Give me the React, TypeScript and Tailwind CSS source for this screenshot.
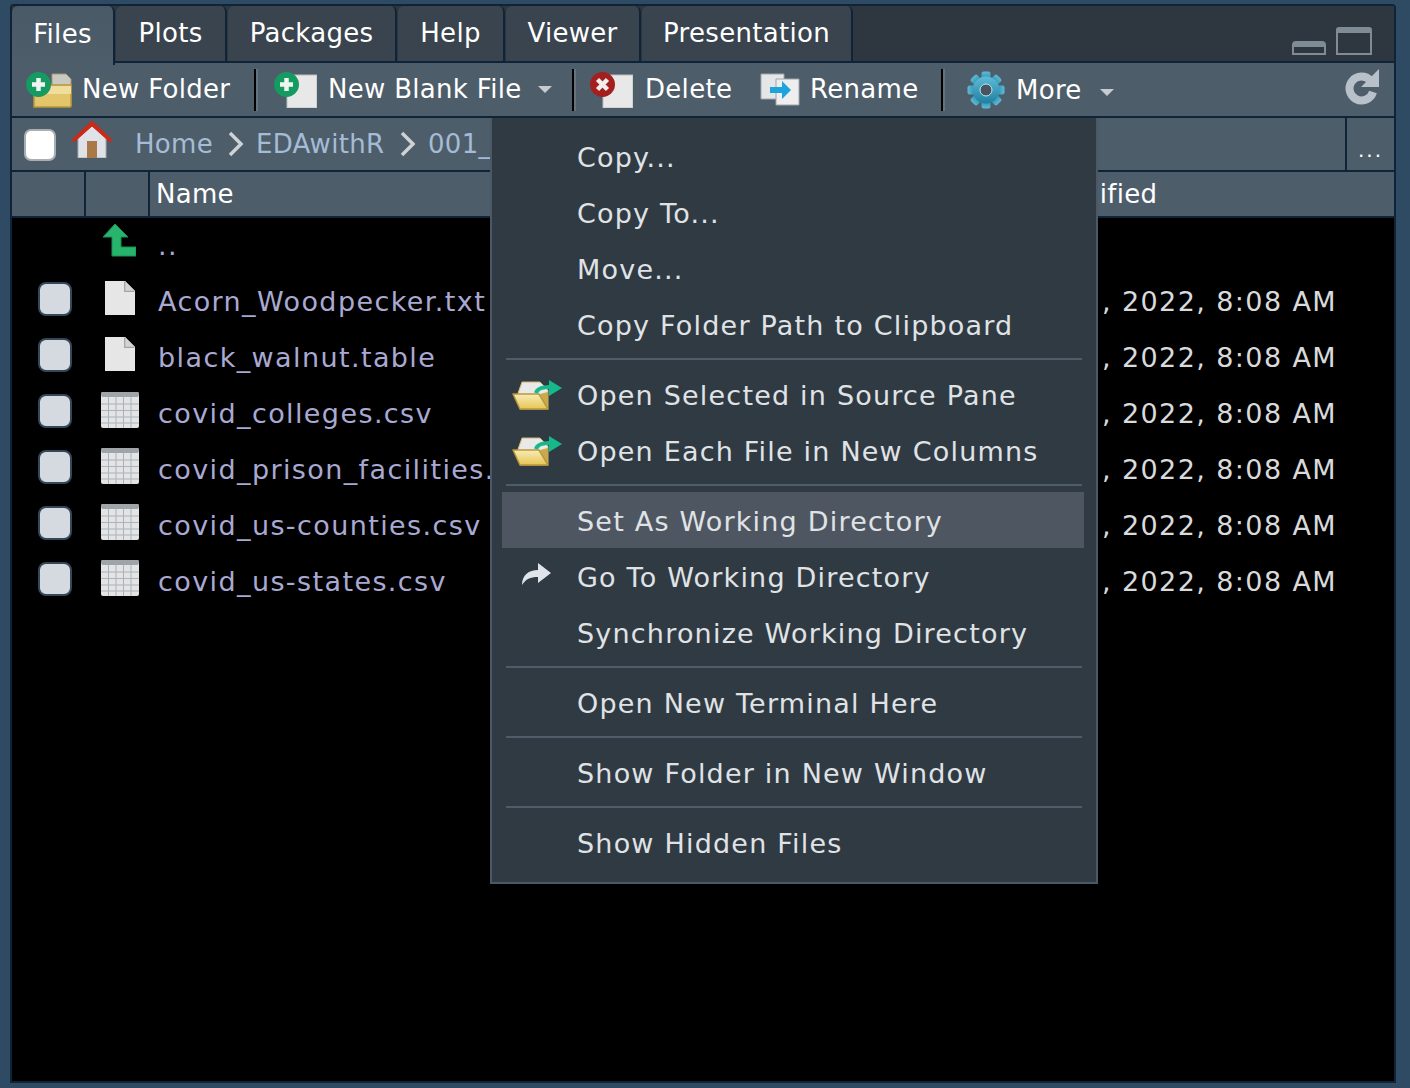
import type { ReactNode } from 'react';

function PlusBadge() {
  return (
    <>
      <circle cx="12.5" cy="12.5" r="12.5" fill="#159a62" />
      <path d="M12.5 6v13M6 12.5h13" stroke="#eef5f0" strokeWidth="4.5" />
    </>
  );
}

function NewFolderIcon() {
  return (
    <svg width="46" height="36" viewBox="0 0 46 36" className="shrink-0">
      <path d="M26 2h14l5 5v27H26z" fill="#c9c9c4" stroke="#a89a6b" />
      <path d="M8 13h37v21a1 1 0 0 1-1 1H8z" fill="#e3c66a" stroke="#b9983a" strokeWidth="1.5" />
      <path d="M8 14h37v8H8z" fill="#efdd9e" />
      <PlusBadge />
    </svg>
  );
}

function PageBadgeIcon({ badge }: { badge: ReactNode }) {
  return (
    <svg width="43" height="36" viewBox="0 0 43 36" className="shrink-0">
      <path d="M13 3h30v33H13z" fill="#e8e8e8" stroke="#b9bec2" />
      {badge}
    </svg>
  );
}

function RenameIcon() {
  return (
    <svg width="40" height="33" viewBox="0 0 40 33" className="shrink-0">
      <path d="M1 1h23v25H1z" fill="#e4e6e8" stroke="#9da6ad" />
      <path d="M16 6h23v26H16z" fill="#eeeeee" stroke="#9da6ad" />
      <path d="M10 14h12V8l9 9-9 9v-6H10z" fill="#1ea4dc" />
    </svg>
  );
}

function GearIcon() {
  const teeth = [0, 45, 90, 135, 180, 225, 270, 315];
  return (
    <svg width="38" height="38" viewBox="0 0 38 38" className="shrink-0">
      <defs>
        <linearGradient id="gear" x1="0" y1="0" x2="0" y2="1">
          <stop offset="0" stopColor="#5cbcd8" />
          <stop offset="1" stopColor="#1f7f9f" />
        </linearGradient>
      </defs>
      {teeth.map((a) => (
        <rect key={a} x="14.5" y="0.5" width="9" height="10" rx="2" fill="url(#gear)" transform={`rotate(${a} 19 19)`} />
      ))}
      <circle cx="19" cy="19" r="13.5" fill="url(#gear)" />
      <circle cx="19" cy="19" r="6" fill="#46555f" stroke="#c4e6f0" strokeWidth="1" />
    </svg>
  );
}

function HomeIcon() {
  return (
    <svg width="42" height="38" viewBox="0 0 42 38" className="shrink-0">
      <path d="M7 17 21 4l14 13v21H7z" fill="#dfe3e8" stroke="#a8adb2" />
      <path d="M16 21h10v17H16z" fill="#a97a48" />
      <path d="M1 20 21 1l20 19-2 2L21 6 3 22z" fill="#cc2a16" stroke="#cc2a16" />
    </svg>
  );
}

function Chevron() {
  return (
    <svg width="16" height="26" viewBox="0 0 16 26" className="shrink-0">
      <path d="M2 2 13 13 2 24" fill="none" stroke="#cdd2d6" strokeWidth="3.5" />
    </svg>
  );
}

function Caret({ className }: { className: string }) {
  return (
    <svg width="14" height="7" viewBox="0 0 14 7" className={className}>
      <path d="M0 0h14L7 7z" fill="#c8ccd0" />
    </svg>
  );
}

function RefreshIcon() {
  return (
    <svg width="36" height="38" viewBox="0 0 36 38" className="shrink-0">
      <path d="M26.5 12.5A12 12 0 1 0 29 24" fill="none" stroke="#b8c1ca" strokeWidth="8" />
      <path d="M35 1v18H17z" fill="#b8c1ca" />
    </svg>
  );
}

function UpIcon() {
  return (
    <svg width="34" height="34" viewBox="0 0 34 34">
      <path d="M13 1 26 14h-7v10h15v9H10V14H1z" fill="#27b56c" stroke="#1d8f55" />
    </svg>
  );
}

function FileIcon() {
  return (
    <svg width="32" height="36" viewBox="0 0 32 36">
      <path d="M1 1h20l10 10v24H1z" fill="#e6e6e6" />
      <path d="M20 1v11h11z" fill="#a7a9ab" />
      <path d="M21 1 31 11H21z" fill="#d4d4d4" stroke="#9a9c9e" strokeWidth="0.5" />
    </svg>
  );
}

function GridIcon() {
  return (
    <svg width="40" height="38" viewBox="0 0 40 38">
      <rect x="1" y="1" width="38" height="36" rx="2" fill="#e2e4e6" />
      <rect x="1" y="1" width="38" height="5" rx="2" fill="#9ea4a8" />
      <path
        d="M8.5 6v31M16 6v31M23.5 6v31M31 6v31M1 13h38M1 19.5h38M1 26h38M1 32h38"
        stroke="#aeb2b6"
        strokeWidth="1"
      />
    </svg>
  );
}

function OpenFolderIcon({ id }: { id: string }) {
  return (
    <svg width="50" height="32" viewBox="0 0 50 32">
      <defs>
        <linearGradient id={id} x1="0" y1="0" x2="0" y2="1">
          <stop offset="0" stopColor="#f6ecb8" />
          <stop offset="1" stopColor="#e8c655" />
        </linearGradient>
      </defs>
      <path d="M6 13 10 2h18l8 8v19H8z" fill="#e9e9e9" stroke="#cdb56a" />
      <path d="M36 29V12l-8 2z" fill="#c9a94a" />
      <path d="M1 14h26l9 15H8z" fill={`url(#${id})`} stroke="#b9983a" strokeWidth="1.5" strokeLinejoin="round" />
      <path d="M24 13c1-4 7-6 14-6" fill="none" stroke="#15b98c" strokeWidth="4" />
      <path d="M37 0l13 8-13 8z" fill="#15b98c" />
    </svg>
  );
}

function GoToIcon() {
  return (
    <svg width="32" height="24" viewBox="0 0 32 24">
      <path d="M2 23C2 13 9 8 18 8V1l13 10-13 10v-6C10 15 6 17 2 23z" fill="#dfe4ea" />
    </svg>
  );
}

function ToolbarSep({ className }: { className: string }) {
  return <div className={`h-[42px] w-[4px] shrink-0 border-r-2 border-[#65737f] bg-black ${className}`} />;
}

const tabs = [
  { name: 'Plots', width: 'w-[111px]' },
  { name: 'Packages', width: 'w-[169px]' },
  { name: 'Help', width: 'w-[107px]' },
  { name: 'Viewer', width: 'w-[135px]' },
  { name: 'Presentation', width: 'w-[211px]' },
];

const files = [
  { name: 'Acorn_Woodpecker.txt', kind: 'file' },
  { name: 'black_walnut.table', kind: 'file' },
  { name: 'covid_colleges.csv', kind: 'grid' },
  { name: 'covid_prison_facilities.csv', kind: 'grid' },
  { name: 'covid_us-counties.csv', kind: 'grid' },
  { name: 'covid_us-states.csv', kind: 'grid' },
];

function MenuItem({ label, icon, active }: { label: string; icon?: ReactNode; active?: boolean }) {
  return (
    <div
      className={`flex h-[56px] items-center ${
        active ? 'mb-[2px] ml-[10px] mr-[12px] bg-[#4e5761] pt-[4px] pl-[75px]' : 'pl-[85px]'
      } relative`}
    >
      {icon && <div className="absolute left-[20px] top-[12px]">{icon}</div>}
      {label}
    </div>
  );
}

function MenuSep({ small }: { small?: boolean }) {
  return (
    <div className={small ? 'h-[12px] pt-[4px]' : 'h-[14px] pt-[4px]'}>
      <div className="mx-[14px] h-[2px] bg-[#4e5d69]" />
    </div>
  );
}

export default function App() {
  return (
    <div className="h-[1088px] w-[1410px] overflow-hidden bg-[#2f4b64] pt-[4px] pl-[10px] text-[26px] tracking-[0.3px] text-white [font-family:'DejaVu_Sans',sans-serif]">
      <div className="relative h-[1079px] w-[1386px] rounded-t-[4px] border-2 border-[#0f2438] bg-black">
        {/* tab strip */}
        <div className="flex h-[57px] items-stretch bg-[#2e3740]">
          <div className="z-10 -mb-[2px] flex w-[103px] items-center justify-center rounded-t-[6px] border-r-2 border-[#0f2438] bg-gradient-to-b from-[#4a5966] to-[#4e5d6a] pb-[2px]">
            Files
          </div>
          <div className="flex flex-1 border-b-2 border-[#0f2438]">
            {tabs.map((tab) => (
              <div
                key={tab.name}
                className={`${tab.width} ml-[1px] flex items-center justify-center rounded-t-[6px] border-r-2 border-[#0f2438] bg-[#3a444e]`}
              >
                {tab.name}
              </div>
            ))}
            <div className="ml-auto flex items-end gap-[10px] pr-[22px] pb-[6px]">
              <div className="h-[14px] w-[34px] rounded-t-[4px] border-x-2 border-b-2 border-t-[6px] border-[#7f8c95]" />
              <div className="h-[28px] w-[36px] rounded-t-[3px] border-x-2 border-b-2 border-t-[6px] border-[#7f8c95]" />
            </div>
          </div>
        </div>

        {/* toolbar */}
        <div className="flex h-[53px] items-center bg-[#4e5d6a] pl-[14px]">
          <NewFolderIcon />
          <span className="ml-[10px] w-[172px] shrink-0">New Folder</span>
          <ToolbarSep className="" />
          <div className="ml-[16px]">
            <PageBadgeIcon badge={<PlusBadge />} />
          </div>
          <span className="ml-[11px] w-[210px] shrink-0">New Blank File</span>
          <Caret className="shrink-0" />
          <ToolbarSep className="ml-[20px]" />
          <div className="ml-[14px]">
            <PageBadgeIcon
              badge={
                <>
                  <circle cx="12.5" cy="12.5" r="12.5" fill="#a3201f" />
                  <path d="m7.5 7.5 10 10m0-10-10 10" stroke="#f3eeee" strokeWidth="4.5" />
                </>
              }
            />
          </div>
          <span className="ml-[12px] w-[115px] shrink-0">Delete</span>
          <RenameIcon />
          <span className="ml-[10px] w-[131px] shrink-0">Rename</span>
          <ToolbarSep className="" />
          <div className="ml-[22px]">
            <GearIcon />
          </div>
          <span className="ml-[11px] mt-[2px] w-[84px] shrink-0">More</span>
          <Caret className="mt-[6px] shrink-0" />
          <div className="ml-auto mb-[6px] pr-[14px]">
            <RefreshIcon />
          </div>
        </div>

        {/* path bar */}
        <div className="flex h-[56px] items-center border-t-2 border-b-2 border-[#0f2438] bg-[#4e5d6a] pl-[12px]">
          <div className="mt-[2px] h-[32px] w-[32px] shrink-0 rounded-[7px] border-2 border-[#a9aeb2] bg-white" />
          <div className="mb-[10px] ml-[15px]">
            <HomeIcon />
          </div>
          <span className="ml-[22px] w-[93px] shrink-0 text-[#a4bcd6]">Home</span>
          <Chevron />
          <span className="ml-[12px] w-[144px] shrink-0 text-[#a4bcd6]">EDAwithR</span>
          <Chevron />
          <span className="ml-[12px] shrink-0 text-[#a4bcd6]">001_</span>
          <div className="ml-auto flex h-full w-[49px] items-end justify-center border-l-2 border-[#0f2438] pb-[6px] text-[20px] leading-[28px] tracking-[2px]">
            ...
          </div>
        </div>

        {/* column headers */}
        <div className="flex h-[46px] border-b-2 border-[#0f2438] bg-[#4e5d6a]">
          <div className="w-[74px] border-r-2 border-[#0f2438]" />
          <div className="w-[64px] border-r-2 border-[#0f2438]" />
          <div className="flex w-[880px] items-center pl-[6px]">Name</div>
          <div className="flex flex-1 items-center pl-[14px]">Modified</div>
        </div>

        {/* file list */}
        <div className="text-[27px] tracking-[1.4px]">
          <div className="flex h-[56px] items-center">
            <div className="mb-[13px] ml-[90px] w-[56px]">
              <UpIcon />
            </div>
            <span className="text-[#a9a9d2]">..</span>
          </div>
          {files.map((file) => (
            <div key={file.name} className="flex h-[56px] items-center">
              <div className="mb-[6px] ml-[26px] h-[34px] w-[34px] shrink-0 rounded-[8px] border-2 border-[#33465a] bg-[#d4dae0]" />
              <div className="mb-[9px] flex w-[86px] shrink-0 justify-center pl-[10px]">
                {file.kind === 'file' ? <FileIcon /> : <GridIcon />}
              </div>
              <span className="w-[944px] shrink-0 text-[#a9a9d2]">{file.name}</span>
              <span className="text-[#d8dadc]">, 2022, 8:08 AM</span>
            </div>
          ))}
        </div>

        {/* context menu */}
        <div className="absolute left-[478px] top-[112px] w-[608px] border-x-2 border-b-2 border-[#4a5965] bg-[#2f3a43] pt-[12px] pb-[10px] text-[27px] tracking-[1.2px] text-[#e0e3e6]">
          <MenuItem label="Copy..." />
          <MenuItem label="Copy To..." />
          <MenuItem label="Move..." />
          <MenuItem label="Copy Folder Path to Clipboard" />
          <MenuSep />
          <MenuItem label="Open Selected in Source Pane" icon={<OpenFolderIcon id="open-a" />} />
          <MenuItem label="Open Each File in New Columns" icon={<OpenFolderIcon id="open-b" />} />
          <MenuSep small />
          <MenuItem label="Set As Working Directory" active />
          <MenuItem label="Go To Working Directory" icon={<div className="ml-[8px]"><GoToIcon /></div>} />
          <MenuItem label="Synchronize Working Directory" />
          <MenuSep />
          <MenuItem label="Open New Terminal Here" />
          <MenuSep />
          <MenuItem label="Show Folder in New Window" />
          <MenuSep />
          <MenuItem label="Show Hidden Files" />
        </div>
      </div>
    </div>
  );
}
